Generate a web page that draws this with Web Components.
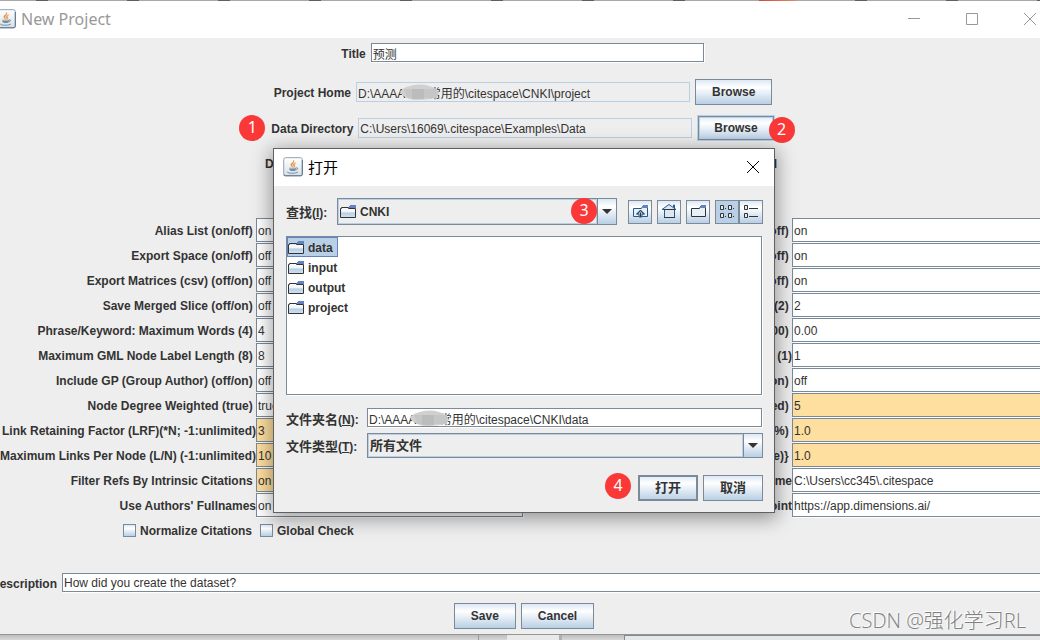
<!DOCTYPE html>
<html lang="en">
<head>
<meta charset="utf-8">
<title>New Project</title>
<style>
  :root {
    --edge: #7a8a99;
    --soft: #b8cfe5;
    --panel: #eeeeee;
    --metal: linear-gradient(#dde8f3, #ffffff 30%, #dfe9f3 62%, #b8cfe5);
    --ink: #333333;
  }
  body {
    margin: 0;
    min-height: 100vh;
    display: flex;
    flex-direction: column;
    overflow: hidden;
    background: #dcdcdc;
    color: var(--ink);
    font: 12px/16px "Liberation Sans", "Noto Sans CJK SC", sans-serif;
  }
</style>
</head>
<body>
<backdrop-top></backdrop-top>
<project-window></project-window>
<backdrop-bottom></backdrop-bottom>
<water-mark>CSDN @强化学习RL</water-mark>

<script>
const define = (name, html, setup) => {
  const template = document.createElement('template');
  template.innerHTML = html;
  customElements.define(name, class extends HTMLElement {
    constructor() {
      super();
      this.attachShadow({ mode: 'open' }).append(template.content.cloneNode(true));
    }
    connectedCallback() {
      if (setup) setup(this, this.shadowRoot);
    }
  });
};

define('java-icon', `
  <style>:host{display:block;width:20px;height:20px;flex:none} svg{display:block}</style>
  <svg width="20" height="20" viewBox="0 0 20 20" aria-hidden="true">
    <defs><linearGradient id="g" x1="0" y1="0" x2="0" y2="1"><stop offset="0" stop-color="#fff"/><stop offset="1" stop-color="#dcdfe2"/></linearGradient></defs>
    <rect x=".7" y=".7" width="18.6" height="18" rx="2" fill="url(#g)" stroke="#8fa3b3"/>
    <path d="M.8 17.5q0 1.3 1.4 1.3h15.6q1.5 0 1.5-1.4V3" fill="none" stroke="#54748f"/>
    <path d="M10.6 3.2c.6 2-3.2 3-2.8 4.8.2 1 1.4 1.4 1.6 2.2.5-1-.6-1.6-.4-2.3.3-1.3 3-2.2 1.6-4.7zM12.8 5.8c-1.6.6-3 1.4-2.4 2.6.3.7.9.9.2 1.8 1.500-.6 1.500-1.500.9-2.200-.5-.7.2-1.300 1.300-2.200z" fill="#ed8b3b" stroke="#ed8b3b" stroke-width=".4"/>
    <path d="M6.300 10.700h6.800q-.2 3-1.500 3.400H7.800q-1.300-.5-1.500-3.400z" fill="#6f8fa8"/>
    <path d="M13 11c2-.8 2.500 1.500-.6 2.100M4.500 14.800c-1.500 1.700 8.500 2 10.300.2M6.500 12.500h5" fill="none" stroke="#6f8fa8"/>
    <path d="M7 11.500h5" stroke="#b7c9d6" stroke-width=".7"/>
  </svg>`);

define('folder-icon', `
  <style>:host{display:block;width:16px;height:16px;flex:none} svg{display:block}</style>
  <svg width="16" height="16" viewBox="0 0 16 16" aria-hidden="true">
    <defs><linearGradient id="f" x1="0" y1="0" x2="0" y2="1"><stop offset="0" stop-color="#fff"/><stop offset=".45" stop-color="#f1f6fb"/><stop offset=".6" stop-color="#b8cfe5"/><stop offset="1" stop-color="#d3e2f0"/></linearGradient></defs>
    <path d="M.5 5.500h8l1-2h6v11H.5z" fill="url(#f)"/>
    <path d="M.5 14.500v-9h1v-1h7v1h7v9z" fill="none" stroke="#333"/>
    <path d="M10 2h6v3H9V3h1z" fill="#6382bf"/>
  </svg>`);

define('step-badge', `
  <style>
    :host{display:block;box-sizing:border-box;width:26px;height:26px;flex:none;border-radius:50%;
      background:#fb3838;color:#fff;font:16px/25px "Noto Sans",sans-serif;text-align:center}
  </style><slot></slot>`);

define('metal-button', `
  <style>
    :host{display:block;flex:none}
    button{display:block;box-sizing:border-box;height:26px;padding:0 16px;border:1px solid var(--edge);border-radius:0;
      background:var(--metal);color:var(--ink);font:bold 12px/24px "Liberation Sans","Noto Sans CJK SC",sans-serif}
    :host([focused]) button{border-color:var(--soft);box-shadow:inset 0 0 0 1px var(--edge),inset 0 0 0 2px var(--soft)}
    :host([default]) button{box-shadow:inset 0 0 0 1px var(--edge)}
    :host([cjk]) button{width:60px;padding:0;font-size:13px}
  </style>
  <button type="button"><slot></slot></button>`);

define('metal-field', `
  <style>
    :host{display:flex;align-items:center;gap:5px}
    label{padding-top:2px;font-weight:bold;white-space:pre;flex:none}
    input{box-sizing:border-box;flex:none;width:333px;height:19px;margin:0 1px 1px 0;padding:1px 1px 0;border:1px solid var(--edge);
      border-radius:0;outline:0;background:#fff;box-shadow:1px 1px 0 #fff;color:var(--ink);
      font:12px/16px "Liberation Sans","Noto Sans CJK SC",sans-serif}
    input[readonly]{width:334px;height:20px;margin:0;border-color:var(--soft);background:var(--panel);box-shadow:none}
    :host([fill]) input{flex:1;width:0;min-width:0}
    :host([cell]){display:grid;grid-template-columns:1fr 1fr;gap:0;height:25px}
    :host([cell]) label{justify-self:end;padding:0}
    :host([cell]) input{width:auto;height:24px;min-width:0;padding-top:2px}
    :host([tint]) input{background:#ffdf9f}
  </style>
  <label for="i"></label><input id="i" type="text">`,
  (el, root) => {
    const input = root.querySelector('input');
    root.querySelector('label').textContent = el.getAttribute('label');
    input.value = el.getAttribute('value');
    input.readOnly = el.hasAttribute('locked');
  });

define('metal-check', `
  <style>
    :host{display:block}
    label{display:flex;align-items:center;gap:4px;font-weight:bold}
    input{appearance:none;width:13px;height:13px;margin:0;border:1px solid var(--edge);background:linear-gradient(#dde8f3,#fff 30%,#b8cfe5)}
  </style>
  <label><input type="checkbox"><slot></slot></label>`);

define('smudge-mark', `
  <style>:host{display:block;position:absolute;pointer-events:none} svg{display:block}</style>
  <svg width="40" height="16" viewBox="0 0 40 16" aria-hidden="true">
    <path d="M1 8Q3 4 9 2.500 20-1 30 2q6 2 8 4l2 4-3 4q-9 2-19 2-8 0-11-3-5-1-5-5z" fill="#d0d0d0"/>
    <path d="M5 5h33v9H8z" fill="#c6c6c6"/><path d="M13 5h12v10H13z" fill="#bcbcbc"/>
  </svg>`);

define('window-controls', `
  <style>
    :host{display:flex;flex:none;align-self:stretch;padding-right:1px}
    button{display:grid;place-items:center;width:58px;padding:0;border:0;background:none;color:#999}
  </style>
  <button type="button" aria-label="Minimize"><svg width="12" height="12"><path d="M0 5.500h12" stroke="currentColor"/></svg></button>
  <button type="button" aria-label="Maximize"><svg width="12" height="12"><path d="M.5.5h11v11H.5z" fill="none" stroke="currentColor"/></svg></button>
  <button type="button" aria-label="Close"><svg width="12" height="12"><path d="M0 0l12 12M12 0L0 12" stroke="currentColor"/></svg></button>`);

define('settings-grid', `
  <style>
    :host{display:grid;grid-template-columns:1fr 1fr}
    .checks{display:grid;grid-template-columns:1fr 1fr;align-items:center;height:25px}
    .checks metal-check{padding:0 4px}
    .checks metal-check:first-child{justify-self:end}
  </style>
  <div class="left"></div><div class="right"></div>`,
  (el, root) => {
    const left = [
      ['Alias List (on/off) ', 'on'], ['Export Space (on/off) ', 'off'], ['Export Matrices (csv) (off/on) ', 'off'],
      ['Save Merged Slice (off/on) ', 'off'], ['Phrase/Keyword: Maximum Words (4) ', '4'],
      ['Maximum GML Node Label Length (8) ', '8'], ['Include GP (Group Author) (off/on) ', 'off'],
      ['Node Degree Weighted (true) ', 'true'], ['Link Retaining Factor (LRF)(*N; -1:unlimited)', '3', 1],
      ['Maximum Links Per Node (L/N) (-1:unlimited)', '10', 1], ['Filter Refs By Intrinsic Citations ', 'on', 1],
      ["Use Authors' Fullnames", 'on']];
    const right = [
      ['off) ', 'on'], ['off) ', 'on'], ['off) ', 'on'], ['(2) ', '2'], ['00) ', '0.00'], ['(1)', '1'], ['on) ', 'off'],
      ['ed) ', '5', 1], ['(%) ', '1.0', 1], ['e)} ', '1.0', 1], ['me', 'C:\\Users\\cc345\\.citespace'],
      ['oint', 'https://app.dimensions.ai/']];
    const fill = (box, rows) => rows.forEach(([label, value, tint]) => {
      const field = document.createElement('metal-field');
      field.setAttribute('cell', '');
      field.setAttribute('label', label);
      field.setAttribute('value', value);
      if (tint) field.setAttribute('tint', '');
      box.append(field);
    });
    fill(root.querySelector('.left'), left);
    fill(root.querySelector('.right'), right);
    root.querySelector('.left').insertAdjacentHTML('beforeend',
      '<div class="checks"><metal-check>Normalize Citations</metal-check><metal-check>Global Check</metal-check></div>');
  });

define('drop-down', `
  <style>
    :host{display:flex;position:relative;box-sizing:border-box;border:1px solid var(--edge);height:27px}
    select{appearance:none;flex:1;min-width:0;margin:0;padding:0 1px;border:1px solid var(--soft);border-radius:0;background:var(--panel);
      color:var(--ink);font:bold 12px/16px "Liberation Sans","Noto Sans CJK SC",sans-serif}
    :host([cjk]) select{font-size:13px}
    :host([cjk]){height:25px}
    .arrow{display:grid;place-items:center;width:18px;flex:none;border-left:1px solid var(--edge);background:var(--metal)}
    folder-icon{display:none}
    :host([folder]) folder-icon{display:block;position:absolute;left:2px;top:4px}
    :host([folder]) select{padding-left:21px}
  </style>
  <select id="s"></select><folder-icon></folder-icon>
  <span class="arrow"><svg width="10" height="5"><path d="M0 0h10L5 5z" fill="#333"/></svg></span>`,
  (el, root) => {
    const select = root.querySelector('select');
    select.setAttribute('aria-label', el.getAttribute('label'));
    select.append(new Option(el.getAttribute('value')));
  });

define('tool-button', `
  <style>
    :host{display:block;flex:none}
    button{display:grid;place-items:center;box-sizing:border-box;width:24px;height:24px;padding:0 0 1px;border:1px solid var(--edge);background:var(--metal)}
    :host([pressed]) button{background:var(--soft)}
    svg{display:block}
  </style>
  <button type="button"></button>`,
  (el, root) => {
    const folder = '<path d="M1.500 5.500h8l1-2h5v10h-14z" fill="#e8f0f8" stroke="#333"/><path d="M11 2h5v3h-5.500z" fill="#6382bf"/>';
    const icons = {
      up: '<path d="M1.500 5.500h8l1-2h5v10h-14z" fill="#e8f0f8" stroke="#24598e"/><path d="M11 2h5v3h-5.500z" fill="#6382bf"/><path d="M8.500 7l4 4h-2.500v3h-3v-3h-2.500z" fill="#b8cfe5" stroke="#24598e"/><path d="M8.500 9.500V14M5 11.500l3.500-4 3.500 4" fill="none" stroke="#333"/>',
      home: '<path d="M1 6.500L8 1.500l7 5z" fill="#dbe8f4" stroke="#24598e"/><path d="M12.500 4V2h1v3" fill="none" stroke="#24598e"/><path d="M3.500 7v7.500h10V7" fill="#dbe8f4" stroke="#24598e"/><path d="M3 6.500h11M3 14.500h11" stroke="#333"/>',
      folder,
      list: '<path d="M1.500 2.500h3v4h-3zM9.500 2.500h3v4h-3zM1.500 10.500h3v4h-3zM9.500 10.500h3v4h-3z" fill="#e3edf6" stroke="#333"/><path d="M6 5h1v1H6zM14 5h1v1h-1zM6 13h1v1H6zM14 13h1v1h-1z" fill="#333"/>',
      detail: '<path d="M1.500 2.500h3v4h-3zM1.500 10.500h3v4h-3z" fill="#e3edf6" stroke="#333"/><path d="M6 5.500h9M6 13.500h9" stroke="#333"/>'
    };
    const button = root.querySelector('button');
    button.setAttribute('aria-label', el.getAttribute('label'));
    button.innerHTML = `<svg width="16" height="16" viewBox="0 0 16 16">${icons[el.getAttribute('icon')]}</svg>`;
  });

define('file-row', `
  <style>
    :host{display:flex;align-items:center;gap:4px;box-sizing:border-box;width:max-content;height:20px;padding-right:4px;
      border:1px solid transparent;font-weight:bold}
    :host([selected]){border-color:#6382bf;background:var(--soft)}
    span{padding-top:2px}
  </style><folder-icon></folder-icon><span><slot></slot></span>`);

define('open-dialog', `
  <style>
    :host{display:block;box-sizing:border-box;width:502px;border:1px solid #606060;background:var(--panel);
      box-shadow:0 4px 18px 2px rgba(0,0,0,.38)}
    header{display:flex;align-items:center;gap:5px;box-sizing:border-box;height:37px;padding:0 0 2px 9px;background:#fff;color:#000}
    header span{flex:1;font:15px/20px "Noto Sans CJK SC",sans-serif}
    header button{display:grid;place-items:center;width:42px;padding:0;border:0;background:none}
    .body{padding:12px 11px 9px 12px;display:flex;flex-direction:column}
    .look,.tools,.pair,.actions{display:flex;align-items:center}
    .look{gap:11px}
    .look drop-down{width:280px}
    .look step-badge{position:absolute;left:234px;top:0}
    .combo{position:relative}
    label,.tag{padding-top:2px;font:bold 13px/16px "Liberation Sans","Noto Sans CJK SC",sans-serif;white-space:nowrap;flex:none}
    small{font-size:12px}
    .tag{width:40px}
    .tools{gap:5px}
    .toggles{display:flex}
    .list{height:159px;box-sizing:border-box;margin:11px 1px 13px 0;border:1px solid var(--edge);background:#fff;box-shadow:1px 1px 0 #fff}
    .pair{position:relative}
    .pair .tag,.pair label{width:81px}
    .pair label{margin-bottom:-2px}
    .pair drop-down{flex:1}
    input{box-sizing:border-box;flex:1;min-width:0;height:19px;margin:0 1px 1px 0;padding:1px 1px 0;border:1px solid var(--edge);outline:0;background:#fff;
      box-shadow:1px 1px 0 #fff;color:var(--ink);font:12px/16px "Liberation Sans","Noto Sans CJK SC",sans-serif}
    .type{margin-top:5px}
    smudge-mark{left:123px;top:2px}
    .actions{justify-content:flex-end;gap:5px;margin-top:15px}
    .actions step-badge{margin:0 2px 4px 0}
  </style>
  <header><java-icon></java-icon><span>打开</span>
    <button type="button" aria-label="Close"><svg width="12" height="12"><path d="M0 0l12 12M12 0L0 12" stroke="#000"/></svg></button></header>
  <div class="body">
    <div class="look">
      <span class="tag">查找<small>(<u>I</u>):</small></span>
      <div class="combo"><drop-down folder label="查找" value="CNKI"></drop-down><step-badge>3</step-badge></div>
      <div class="tools">
        <tool-button icon="up" label="Up One Level"></tool-button>
        <tool-button icon="home" label="Home"></tool-button>
        <tool-button icon="folder" label="Create New Folder"></tool-button>
        <div class="toggles"><tool-button icon="list" label="List" pressed></tool-button><tool-button icon="detail" label="Details"></tool-button></div>
      </div>
    </div>
    <div class="list"><file-row selected>data</file-row><file-row>input</file-row><file-row>output</file-row><file-row>project</file-row></div>
    <div class="pair"><label for="n">文件夹名<small>(<u>N</u>):</small></label>
      <input id="n" type="text" value="D:\\AAAA　　常用的\\citespace\\CNKI\\data"><smudge-mark></smudge-mark></div>
    <div class="pair type"><span class="tag">文件类型<small>(<u>T</u>):</small></span>
      <drop-down cjk label="文件类型" value="所有文件"></drop-down></div>
    <div class="actions"><step-badge>4</step-badge><metal-button cjk default>打开</metal-button><metal-button cjk>取消</metal-button></div>
  </div>`);

define('project-window', `
  <style>
    :host{display:block;position:relative;margin:0 -20px 0 -12px;border-bottom:1px solid #969696;background:var(--panel)}
    header{display:flex;align-items:center;gap:5px;box-sizing:border-box;height:37px;padding:0 0 2px 8px;background:#fff}
    header span{flex:1;color:#999;font:16px/24px "Noto Sans",sans-serif}
    .row{display:flex;justify-content:center;align-items:center;height:36px;padding-right:2px}
    .row.title{height:30px;margin-bottom:6px}
    .line{display:flex;align-items:center;gap:5px;position:relative}
    .one{position:absolute;left:-32px;top:0}
    .two{position:absolute;right:-20px;top:2px}
    smudge-mark{left:125px;top:5px}
    .wide{width:512px;justify-content:space-between;font-weight:bold;margin-right:4px}
    settings-grid{margin:36px 0 30px}
    .description{padding-left:3px}
    footer{display:flex;justify-content:center;gap:5px;padding:10px 0 5px}
    open-dialog{position:absolute;left:calc(50% - 251px);top:147px}
  </style>
  <header><java-icon></java-icon><span>New Project</span><window-controls></window-controls></header>
  <div class="row title"><metal-field label="Title" value="预测"></metal-field></div>
  <div class="row"><div class="line"><metal-field locked label="Project Home" value="D:\\AAAA　　常用的\\citespace\\CNKI\\project"></metal-field><smudge-mark></smudge-mark><metal-button>Browse</metal-button></div></div>
  <div class="row"><div class="line"><step-badge class="one">1</step-badge><metal-field locked label="Data Directory" value="C:\\Users\\16069\\.citespace\\Examples\\Data"></metal-field><metal-button focused>Browse</metal-button><step-badge class="two">2</step-badge></div></div>
  <div class="row"><div class="line wide"><span>D</span><span>d</span></div></div>
  <settings-grid></settings-grid>
  <metal-field class="description" fill label="Description" value="How did you create the dataset?"></metal-field>
  <footer><metal-button>Save</metal-button><metal-button>Cancel</metal-button></footer>
  <open-dialog></open-dialog>`);

define('backdrop-top', `
  <style>:host{display:block;height:1px;background:linear-gradient(90deg,transparent 73%,#d0493a 73%,#d98a6a 76.500%,transparent 76.500%),
    repeating-linear-gradient(90deg,#a9a7aa 0 36px,#625c66 36px 48px,#a9a7aa 48px 91px)}</style>`);

define('backdrop-bottom', `
  <style>
    :host{display:flex;flex:1;min-height:5px;background:linear-gradient(#bdbdbd,#d8d8d8 5px)}
    .a{width:46%;border-right:1px solid #999}
    .b{width:28px}
    .c{width:52px;background:#e9e9e9;border-right:3px solid #aab0b6}
    .d{width:62px}
    .e{flex:1;box-sizing:border-box;border:solid var(--edge);border-width:1px 0 0 1px;background:#e6e6e6}
  </style><div class="a"></div><div class="b"></div><div class="c"></div><div class="d"></div><div class="e"></div>`);

define('water-mark', `
  <style>
    :host{display:block;position:absolute;right:14px;bottom:5px;color:#808080;
      font:300 20px/28px "Open Sans","Noto Sans CJK SC",sans-serif;text-shadow:-1px -1px 0 #fff;pointer-events:none}
  </style><slot></slot>`);
</script>
</body>
</html>
